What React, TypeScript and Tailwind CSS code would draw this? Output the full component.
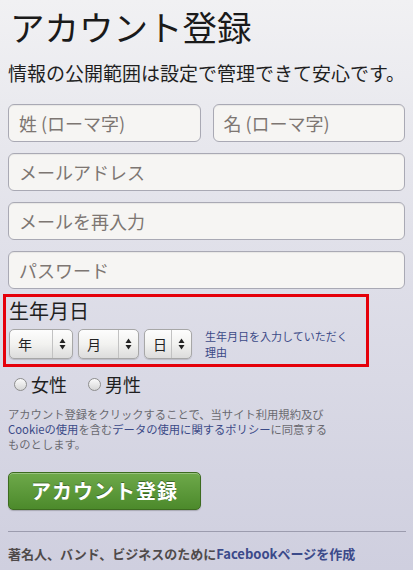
const font = {
  fontFamily: '"Noto Sans CJK JP", "Noto Sans", sans-serif',
};

function Field({ placeholder, className = "" }: { placeholder: string; className?: string }) {
  return (
    <div
      className={`flex h-[38px] items-center rounded-[6px] border border-[#a9a9b4] bg-[#f6f5f3] px-[10px] text-[18px] text-[#7d7672] shadow-[inset_0_1px_1px_rgba(0,0,0,0.06)] ${className}`}
    >
      {placeholder}
    </div>
  );
}

function Arrows() {
  return (
    <svg width="7" height="12" viewBox="0 0 7 12" className="flex-none">
      <path d="M3.5 0.5 L6.5 5 L0.5 5 Z" fill="#222" />
      <path d="M3.5 11.5 L6.5 7 L0.5 7 Z" fill="#222" />
    </svg>
  );
}

function Select({ label, width }: { label: string; width: string }) {
  return (
    <div
      className={`flex h-[30px] ${width} items-stretch rounded-[5px] border border-[#a7a7a7] bg-gradient-to-b from-[#fdfdfd] via-[#f2f2f0] to-[#dcdcdc] shadow-[0_1px_1px_rgba(0,0,0,0.15)]`}
    >
      <span className="flex flex-1 items-center pl-[8px] text-[14px] text-[#222]">{label}</span>
      <span className="flex w-[20px] items-center justify-center border-l border-[#c2c2c2]">
        <Arrows />
      </span>
    </div>
  );
}

function Radio({ label }: { label: string }) {
  return (
    <span className="flex items-center gap-[4px]">
      <span className="size-[13px] rounded-full border border-[#8e8e8e] bg-gradient-to-b from-[#fbfbfb] to-[#d6d6d6]" />
      <span className="text-[18px] text-[#1f1f1f]">{label}</span>
    </span>
  );
}

export default function App() {
  return (
    <div
      style={font}
      className="h-[570px] w-[413px] overflow-hidden bg-gradient-to-b from-[#f1f1f3] via-[#dedee8] to-[#cfcfdf] px-[8px]"
    >
      <h1 className="pl-[2px] text-[34.5px] leading-[52px] text-[#1a1a1a]">
        アカウント登録
      </h1>
      <p className="mt-[8px] whitespace-nowrap text-[19px] leading-[26px] text-[#1f1f1f]">
        情報の公開範囲は設定で管理できて安心です。
      </p>

      <div className="mt-[18px] flex gap-[12px]">
        <Field placeholder="姓 (ローマ字)" className="flex-1" />
        <Field placeholder="名 (ローマ字)" className="flex-1" />
      </div>
      <Field placeholder="メールアドレス" className="mt-[11px]" />
      <Field placeholder="メールを再入力" className="mt-[11px]" />
      <Field placeholder="パスワード" className="mt-[11px]" />

      <div className="mt-[5px] -ml-[5px] h-[73px] w-[366px] border-[3px] border-[#e5000a] px-[3px]">
        <div className="pt-[2px] text-[20px] leading-[24px] text-[#1f1f1f]">生年月日</div>
        <div className="mt-[5px] flex items-center">
          <Select label="年" width="w-[64px]" />
          <Select label="月" width="ml-[5px] w-[61px]" />
          <Select label="日" width="ml-[5px] w-[48px]" />
          <p className="ml-[13px] text-[11px] leading-[16px] text-[#3b4a87]">
            生年月日を入力していただく
            <br />
            理由
          </p>
        </div>
      </div>

      <div className="mt-[5px] flex h-[24px] items-center gap-[21px] pl-[6px]">
        <Radio label="女性" />
        <Radio label="男性" />
      </div>

      <p className="mt-[11px] text-[11.3px] leading-[15px] text-[#6a6a70]">
        アカウント登録をクリックすることで、当サイト利用規約及び
        <br />
        <span className="text-[#3b4a87]">Cookieの使用</span>を含む
        <span className="text-[#3b4a87]">データの使用に関するポリシー</span>に同意する
        <br />
        ものとします。
      </p>

      <button className="mt-[20px] flex h-[38px] w-[193px] items-center justify-center rounded-[5px] border border-[#3d6b20] bg-gradient-to-b from-[#6ea94a] to-[#4c8a2b] text-[20px] font-bold tracking-[1px] text-white shadow-[inset_0_1px_0_rgba(255,255,255,0.3),0_1px_1px_rgba(0,0,0,0.2)] [text-shadow:0_-1px_0_rgba(0,0,0,0.35)]">
        アカウント登録
      </button>

      <div className="mt-[21px] h-px w-[398px] bg-[#9c9cae]" />

      <p className="mt-[12px] text-[13px] font-bold text-[#4f4a4a]">
        著名人、バンド、ビジネスのために
        <span className="text-[#3b4a8a]">Facebookページを作成</span>
      </p>
    </div>
  );
}
